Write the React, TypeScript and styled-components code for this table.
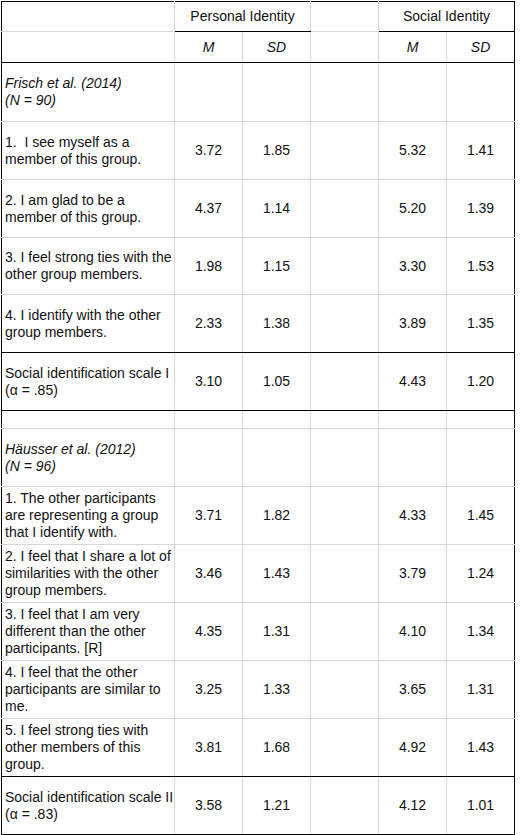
import { Fragment } from "react";
import styled, { createGlobalStyle } from "styled-components";

type Rule = "light" | "strong";

type ItemRow = {
  label: string[];
  italic?: boolean;
  values?: [string, string, string, string];
  height: number;
  rule: Rule;
};

const rows: ItemRow[] = [
  { label: ["Frisch et al. (2014)", "(N = 90)"], italic: true, height: 59, rule: "light" },
  { label: ["1.\u00a0 I see myself as a", "member of this group."], values: ["3.72", "1.85", "5.32", "1.41"], height: 58, rule: "light" },
  { label: ["2. I am glad to be a", "member of this group."], values: ["4.37", "1.14", "5.20", "1.39"], height: 58, rule: "light" },
  { label: ["3. I feel strong ties with the", "other group members."], values: ["1.98", "1.15", "3.30", "1.53"], height: 57, rule: "light" },
  { label: ["4. I identify with the other", "group members."], values: ["2.33", "1.38", "3.89", "1.35"], height: 58, rule: "strong" },
  { label: ["Social identification scale I", "(α = .85)"], values: ["3.10", "1.05", "4.43", "1.20"], height: 58, rule: "strong" },
  { label: [], height: 18, rule: "light" },
  { label: ["Häusser et al. (2012)", "(N = 96)"], italic: true, height: 58, rule: "light" },
  { label: ["1. The other participants", "are representing a group", "that I identify with."], values: ["3.71", "1.82", "4.33", "1.45"], height: 58, rule: "light" },
  { label: ["2. I feel that I share a lot of", "similarities with the other", "group members."], values: ["3.46", "1.43", "3.79", "1.24"], height: 58, rule: "light" },
  { label: ["3. I feel that I am very", "different than the other", "participants. [R]"], values: ["4.35", "1.31", "4.10", "1.34"], height: 58, rule: "light" },
  { label: ["4. I feel that the other", "participants are similar to", "me."], values: ["3.25", "1.33", "3.65", "1.31"], height: 58, rule: "light" },
  { label: ["5. I feel strong ties with", "other members of this", "group."], values: ["3.81", "1.68", "4.92", "1.43"], height: 58, rule: "strong" },
  { label: ["Social identification scale II", "(α = .83)"], values: ["3.58", "1.21", "4.12", "1.01"], height: 58, rule: "strong" },
];

const App = () => {
  return (
    <>
      <GlobalStyle />
      <Page>
        <Table>
          <colgroup>
            <col style={{ width: 173 }} />
            <col style={{ width: 68 }} />
            <col style={{ width: 68 }} />
            <col style={{ width: 68 }} />
            <col style={{ width: 68 }} />
            <col style={{ width: 68 }} />
          </colgroup>
          <tbody>
            <tr>
              <Cell $height={30} $rule="light" />
              <Cell colSpan={2} $height={30} $rule="strong" $center>
                Personal Identity
              </Cell>
              <Cell $height={30} $rule="light" />
              <Cell colSpan={2} $height={30} $rule="strong" $center>
                Social Identity
              </Cell>
            </tr>
            <tr>
              <Cell $height={31} $rule="strong" />
              <Cell $height={31} $rule="strong" $center $italic>
                M
              </Cell>
              <Cell $height={31} $rule="strong" $center $italic>
                SD
              </Cell>
              <Cell $height={31} $rule="strong" />
              <Cell $height={31} $rule="strong" $center $italic>
                M
              </Cell>
              <Cell $height={31} $rule="strong" $center $italic>
                SD
              </Cell>
            </tr>
            {rows.map((row, i) => (
              <tr key={i}>
                <LabelCell $height={row.height} $rule={row.rule} $italic={row.italic}>
                  {row.label.map((line, j) => (
                    <Line key={j}>{line}</Line>
                  ))}
                </LabelCell>
                {row.values ? (
                  <>
                    <Cell $height={row.height} $rule={row.rule} $center>
                      {row.values[0]}
                    </Cell>
                    <Cell $height={row.height} $rule={row.rule} $center>
                      {row.values[1]}
                    </Cell>
                    <Cell $height={row.height} $rule={row.rule} />
                    <Cell $height={row.height} $rule={row.rule} $center>
                      {row.values[2]}
                    </Cell>
                    <Cell $height={row.height} $rule={row.rule} $center>
                      {row.values[3]}
                    </Cell>
                  </>
                ) : (
                  <Fragment>
                    {[0, 1, 2, 3, 4].map((k) => (
                      <Cell key={k} $height={row.height} $rule={row.rule} />
                    ))}
                  </Fragment>
                )}
              </tr>
            ))}
          </tbody>
        </Table>
      </Page>
    </>
  );
};

export default App;

const GlobalStyle = createGlobalStyle`
  html, body {
    margin: 0;
    padding: 0;
    background: #ffffff;
  }
  body {
    font-family: "Liberation Sans", Arial, sans-serif;
    color: #111111;
  }
`;

const Page = styled.div`
  padding: 1px 0 0 1px;
  width: 520px;
`;

const Table = styled.table`
  border-collapse: collapse;
  table-layout: fixed;
  width: 513px;
  border: 1px solid #000000;
  font-size: 14px;
  line-height: 17px;
`;

type CellProps = {
  $height: number;
  $rule: Rule;
  $center?: boolean;
  $italic?: boolean;
};

const Cell = styled.td<CellProps>`
  box-sizing: border-box;
  height: ${(p) => p.$height}px;
  padding: 0 4px;
  vertical-align: middle;
  text-align: ${(p) => (p.$center ? "center" : "left")};
  font-style: ${(p) => (p.$italic ? "italic" : "normal")};
  border-left: 1px solid #d6d6d6;
  border-right: 1px solid #d6d6d6;
  border-top: none;
  border-bottom: 1px solid ${(p) => (p.$rule === "strong" ? "#000000" : "#d6d6d6")};
  white-space: nowrap;

  &:first-child {
    border-left: 1px solid #000000;
  }
  &:last-child {
    border-right: 1px solid #000000;
  }
`;

const LabelCell = styled(Cell)`
  padding: 0 3px;
`;

const Line = styled.span`
  display: block;
`;
